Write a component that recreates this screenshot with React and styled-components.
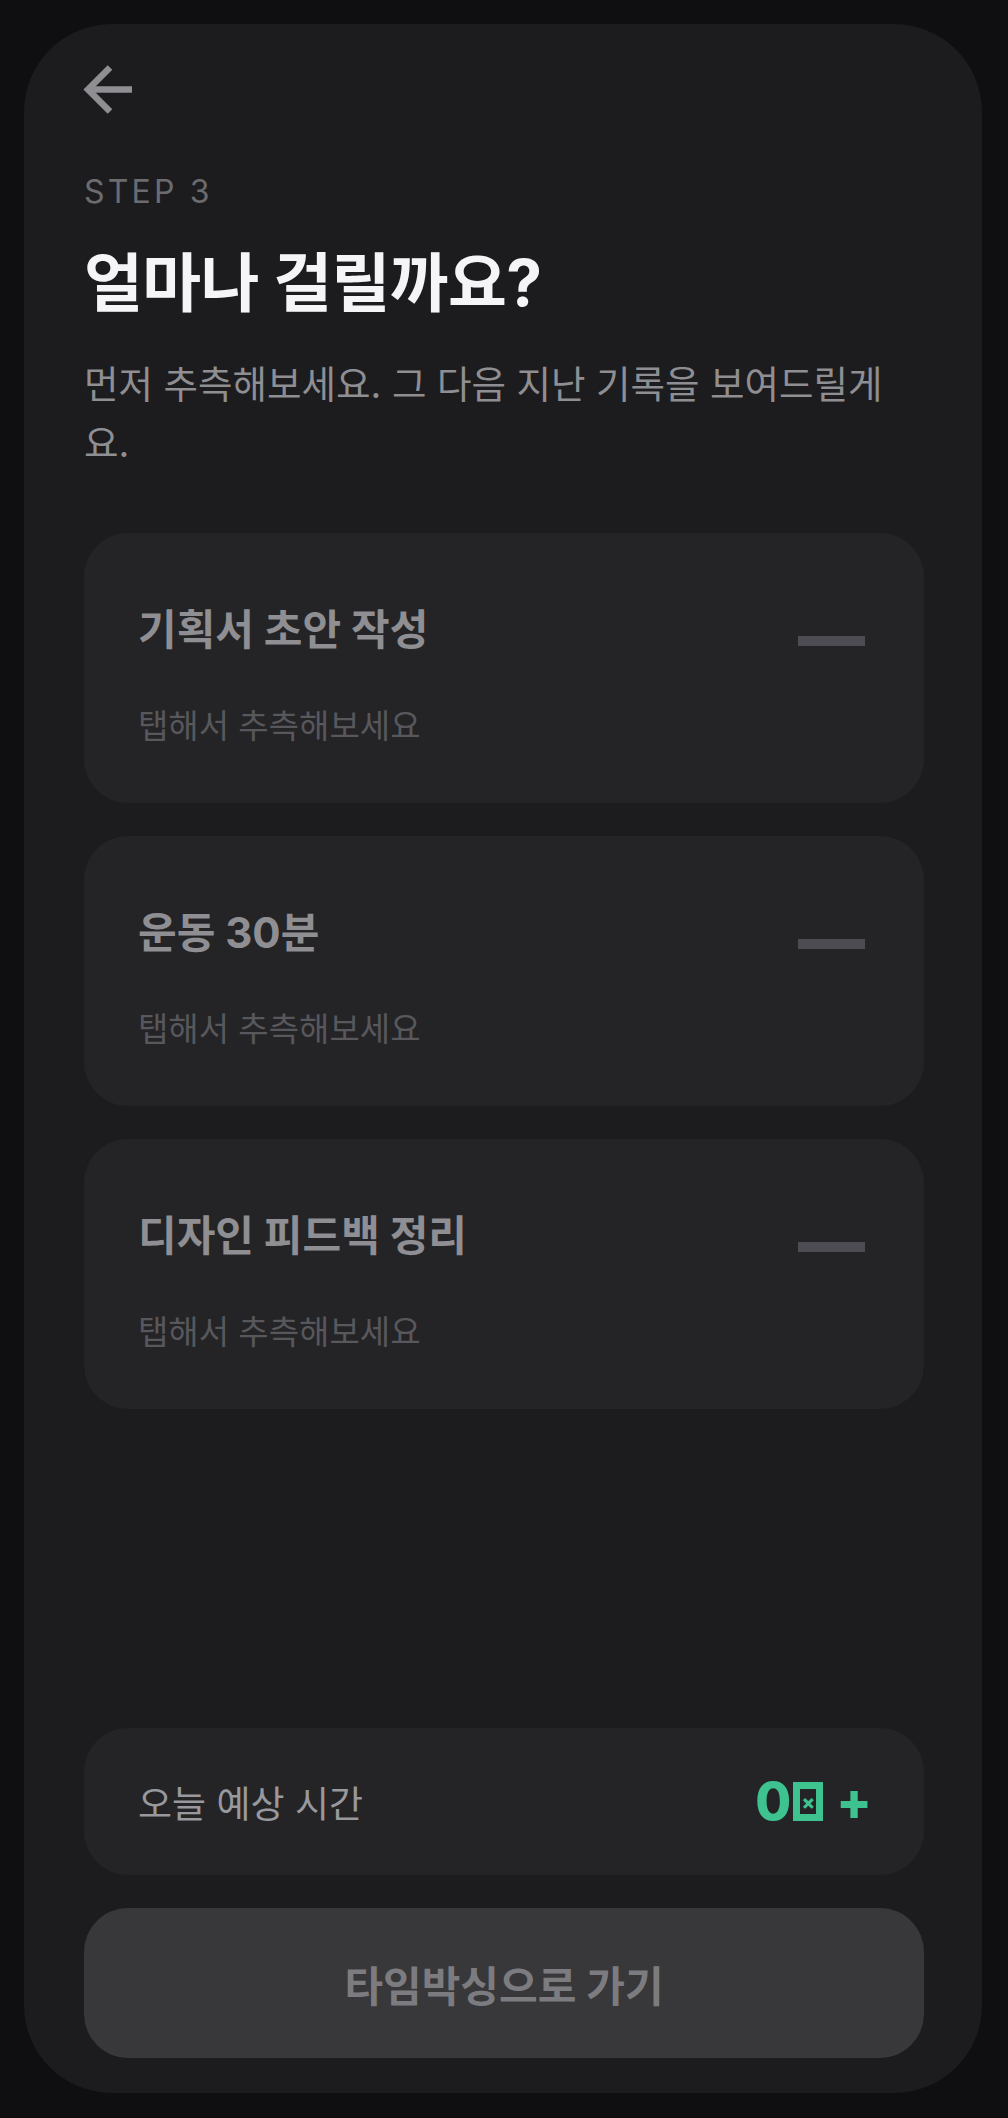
import React from 'react'
import styled, { createGlobalStyle } from 'styled-components'

const GlobalStyle = createGlobalStyle`
  html, body {
    margin: 0;
    padding: 0;
    background: #0f0f11;
  }
  body {
    font-family: Inter, "Noto Sans CJK KR", sans-serif;
    -webkit-font-smoothing: antialiased;
  }
  * { box-sizing: border-box; }
`

const Page = styled.div`
  padding: 24px 26px 25px 24px;
`

const Phone = styled.div`
  height: 2069px;
  background: #1c1c1e;
  border-radius: 88px;
  padding: 37px 58px 35px 60px;
  display: flex;
  flex-direction: column;
`

const BackButton = styled.button`
  width: 56px;
  height: 56px;
  margin-left: -4px;
  padding: 0;
  border: 0;
  background: transparent;
  display: flex;
  align-items: center;
  justify-content: center;
  cursor: pointer;
`

const Step = styled.div`
  margin-top: 55px;
  font-size: 32px;
  line-height: 40px;
  letter-spacing: 0.1em;
  color: #6b6b70;
`

const Title = styled.h1`
  margin: 33px 0 0;
  font-size: 64px;
  line-height: 76px;
  font-weight: 700;
  letter-spacing: -0.01em;
  color: #f5f5f7;
`

const Subtitle = styled.p`
  margin: 34px 0 0;
  max-width: 820px;
  font-size: 37.5px;
  line-height: 59px;
  color: #8e8e93;
`

const TaskList = styled.div`
  margin-top: 60px;
  display: flex;
  flex-direction: column;
  gap: 33px;
`

const TaskCard = styled.div`
  height: 270px;
  background: #242426;
  border-radius: 44px;
  padding: 72px 59px 0 54px;
  cursor: pointer;
`

const TaskHead = styled.div`
  display: flex;
  justify-content: space-between;
  align-items: flex-start;
`

const TaskName = styled.div`
  font-size: 42px;
  line-height: 50px;
  font-weight: 700;
  color: #8e8e93;
`

const Dash = styled.div`
  width: 67px;
  height: 10px;
  margin-top: 31px;
  background: #4c4c52;
`

const TaskHint = styled.div`
  margin-top: 49px;
  font-size: 33px;
  line-height: 44px;
  color: #57575c;
`

const Spacer = styled.div`
  flex: 1;
`

const Summary = styled.div`
  height: 147px;
  background: #242426;
  border-radius: 44px;
  padding: 0 52px 0 54px;
  display: flex;
  align-items: center;
  justify-content: space-between;
`

const SummaryLabel = styled.div`
  font-size: 37px;
  color: #98989d;
`

const SummaryValue = styled.div`
  display: flex;
  align-items: center;
  font-size: 52px;
  line-height: 1;
  font-weight: 800;
  color: #3ec28f;
`

const Missing = styled.span`
  width: 30px;
  height: 39px;
  margin: 0 13px 0 2px;
  border: 7px solid #3ec28f;
  display: inline-flex;
  align-items: center;
  justify-content: center;
  font-size: 20px;
  font-weight: 800;
  line-height: 1;
`

const GoButton = styled.button`
  margin-top: 33px;
  height: 150px;
  width: 100%;
  border: 0;
  border-radius: 44px;
  background: #38383a;
  font-family: inherit;
  font-size: 42px;
  font-weight: 700;
  color: #7c7c80;
  cursor: pointer;
`

const tasks = ['기획서 초안 작성', '운동 30분', '디자인 피드백 정리']

function ArrowLeft() {
  return (
    <svg width="56" height="56" viewBox="0 0 56 56" fill="none">
      <path d="M30 6.5L8 28.5L30 50.5" stroke="#8e8e93" strokeWidth="6.5" strokeLinejoin="miter" />
      <path d="M9 28.5H52" stroke="#8e8e93" strokeWidth="6.5" />
    </svg>
  )
}

export default function App() {
  return (
    <Page>
      <GlobalStyle />
      <Phone>
        <BackButton aria-label="뒤로">
          <ArrowLeft />
        </BackButton>
        <Step>STEP 3</Step>
        <Title>얼마나 걸릴까요?</Title>
        <Subtitle>먼저 추측해보세요. 그 다음 지난 기록을 보여드릴게요.</Subtitle>
        <TaskList>
          {tasks.map(name => (
            <TaskCard key={name}>
              <TaskHead>
                <TaskName>{name}</TaskName>
                <Dash />
              </TaskHead>
              <TaskHint>탭해서 추측해보세요</TaskHint>
            </TaskCard>
          ))}
        </TaskList>
        <Spacer />
        <Summary>
          <SummaryLabel>오늘 예상 시간</SummaryLabel>
          <SummaryValue>
            0<Missing>×</Missing>+
          </SummaryValue>
        </Summary>
        <GoButton>타임박싱으로 가기</GoButton>
      </Phone>
    </Page>
  )
}
